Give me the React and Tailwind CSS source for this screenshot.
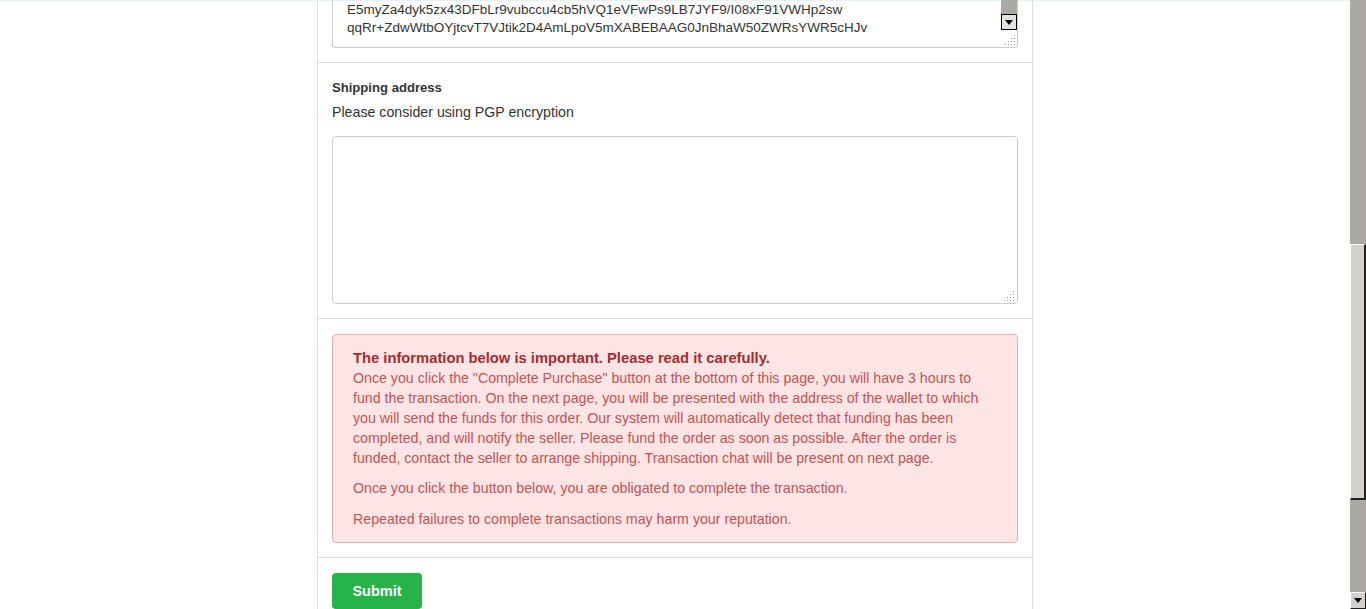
export default function App() {
  const font = { fontFamily: '"Liberation Sans", Arial, sans-serif' };
  return (
    <div className="flex h-[609px] w-[1366px] overflow-hidden bg-white" style={font}>
      <div className="relative flex min-w-0 flex-1 justify-center">
        <div className="absolute left-0 right-0 top-0 h-px bg-[#e2f2f8]" />
        <div className="flex w-[716px] shrink-0 flex-col border-x border-[#dddddd]">
          {/* Section 1: bottom of PGP key textarea */}
          <div className="border-b border-[#dddddd] px-[14px] pb-[14px]">
            <div className="relative flex h-[48px] rounded-b border-x border-b border-[#cccccc]">
              <div className="flex-1 pl-[14px] pt-px text-[13.5px] leading-[18px] text-[#333]">
                <div>E5myZa4dyk5zx43DFbLr9vubccu4cb5hVQ1eVFwPs9LB7JYF9/I08xF91VWHp2sw</div>
                <div>qqRr+ZdwWtbOYjtcvT7VJtik2D4AmLpoV5mXABEBAAG0JnBhaW50ZWRsYWR5cHJv</div>
              </div>
              <div className="flex w-[16px] shrink-0 flex-col">
                <div className="h-[14px] bg-[#aca8a4]" />
                <div className="flex h-[16px] items-center justify-center border border-black bg-[#e4e2de]">
                  <svg width="8" height="5" viewBox="0 0 8 5"><path d="M0 0h8L4 5z" fill="#000" /></svg>
                </div>
                <div className="flex flex-1 items-end justify-end pb-[2px] pr-[1px]">
                  <Grip />
                </div>
              </div>
            </div>
          </div>

          {/* Section 2: shipping address */}
          <div className="border-b border-[#dddddd] px-[14px] pb-[14px] pt-[15px]">
            <div className="text-[13.1px] font-bold leading-[20px] text-[#333]">Shipping address</div>
            <div className="mt-[4px] text-[14.2px] leading-[20px] text-[#333]">Please consider using PGP encryption</div>
            <div className="mt-[14px] flex h-[168px] items-end justify-end rounded border border-[#cccccc] p-[2px]">
              <Grip />
            </div>
          </div>

          {/* Section 3: alert */}
          <div className="border-b border-[#dddddd] px-[14px] pb-[14px] pt-[15px]">
            <div className="rounded border border-[#e2aeae] bg-[#fee5e5] px-[20px] pb-[13px] pt-[13px]">
              <div className="text-[14.75px] font-bold leading-[20px] text-[#a52c2c]">
                The information below is important. Please read it carefully.
              </div>
              <p className="text-[14.2px] leading-[20px] text-[#c55252]">
                Once you click the "Complete Purchase" button at the bottom of this page, you will have 3 hours to fund the transaction. On the next page, you will be presented with the address of the wallet to which you will send the funds for this order. Our system will automatically detect that funding has been completed, and will notify the seller. Please fund the order as soon as possible. After the order is funded, contact the seller to arrange shipping. Transaction chat will be present on next page.
              </p>
              <p className="mt-[10px] text-[14.2px] leading-[20px] text-[#c55252]">
                Once you click the button below, you are obligated to complete the transaction.
              </p>
              <p className="mt-[11px] text-[14.2px] leading-[20px] text-[#c55252]">
                Repeated failures to complete transactions may harm your reputation.
              </p>
            </div>
          </div>

          {/* Section 4: submit */}
          <div className="px-[14px] pt-[15px]">
            <button className="h-[36px] w-[90px] rounded bg-[#25b34a] pt-px text-[14.5px] font-bold text-white">
              Submit
            </button>
          </div>
        </div>
      </div>

      {/* page scrollbar */}
      <div className="flex h-[609px] w-[16px] shrink-0 flex-col">
        <div className="h-[244px] w-[16px] shrink-0 bg-[#aca8a4]" />
        <div className="h-[256px] w-[16px] shrink-0 border-b-2 border-l border-r-2 border-t border-b-[#222222] border-l-[#ffffff] border-r-[#222222] border-t-[#ffffff] bg-[#d4d1cc]" />
        <div className="w-[16px] flex-1 bg-[#aca8a4]" />
        <div className="flex h-[17px] w-[16px] shrink-0 items-center justify-center border border-b-[#222222] border-l-[#ffffff] border-r-[#222222] border-t-[#ffffff] bg-[#d4d1cc]">
          <svg width="8" height="5" viewBox="0 0 8 5"><path d="M0 0h8L4 5z" fill="#000" /></svg>
        </div>
      </div>
    </div>
  );
}

function Grip() {
  return (
    <svg width="11" height="11" viewBox="0 0 11 11">
      {[
        [9, 1], [9, 4], [6, 4], [9, 7], [6, 7], [3, 7], [9, 10], [6, 10], [3, 10], [0, 10],
      ].map(([x, y], i) => (
        <rect key={i} x={x} y={y} width="1" height="1" fill="#999" />
      ))}
    </svg>
  );
}
